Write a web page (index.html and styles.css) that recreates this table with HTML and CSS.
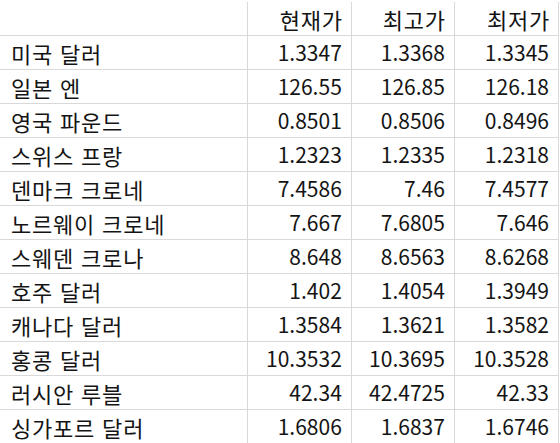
FILE: index.html
```html
<!DOCTYPE html>
<html lang="ko">
<head>
<meta charset="utf-8">
<link rel="stylesheet" href="styles.css">
</head>
<body>
<table class="rates">
  <colgroup>
    <col class="c-name"><col class="c-num"><col class="c-num2"><col class="c-num">
  </colgroup>
  <thead>
    <tr><th class="name"></th><th>현재가</th><th>최고가</th><th>최저가</th></tr>
  </thead>
  <tbody>
    <tr><td class="name">미국 달러</td><td>1.3347</td><td>1.3368</td><td>1.3345</td></tr>
    <tr><td class="name">일본 엔</td><td>126.55</td><td>126.85</td><td>126.18</td></tr>
    <tr><td class="name">영국 파운드</td><td>0.8501</td><td>0.8506</td><td>0.8496</td></tr>
    <tr><td class="name">스위스 프랑</td><td>1.2323</td><td>1.2335</td><td>1.2318</td></tr>
    <tr><td class="name">덴마크 크로네</td><td>7.4586</td><td>7.46</td><td>7.4577</td></tr>
    <tr><td class="name">노르웨이 크로네</td><td>7.667</td><td>7.6805</td><td>7.646</td></tr>
    <tr><td class="name">스웨덴 크로나</td><td>8.648</td><td>8.6563</td><td>8.6268</td></tr>
    <tr><td class="name">호주 달러</td><td>1.402</td><td>1.4054</td><td>1.3949</td></tr>
    <tr><td class="name">캐나다 달러</td><td>1.3584</td><td>1.3621</td><td>1.3582</td></tr>
    <tr><td class="name">홍콩 달러</td><td>10.3532</td><td>10.3695</td><td>10.3528</td></tr>
    <tr><td class="name">러시안 루블</td><td>42.34</td><td>42.4725</td><td>42.33</td></tr>
    <tr><td class="name">싱가포르 달러</td><td>1.6806</td><td>1.6837</td><td>1.6746</td></tr>
  </tbody>
</table>
</body>
</html>
```
FILE: styles.css
```css
html, body {
  margin: 0;
  padding: 0;
  background: #ffffff;
}
body {
  font-family: "Noto Sans CJK KR", "Noto Sans", sans-serif;
  color: #141414;
  overflow: hidden;
}
.rates {
  border-collapse: collapse;
  table-layout: fixed;
  width: 559px;
  margin-top: 2px;
}
.c-name { width: 247px; }
.c-num { width: 104px; }
.c-num2 { width: 103px; }
.rates th,
.rates td {
  height: 33px;
  padding: 0 9px 0 10px;
  font-size: 21px;
  font-weight: normal;
  line-height: 1;
  text-align: right;
  vertical-align: middle;
  border-right: 1px solid #d9d9d9;
  border-bottom: 1px solid #d9d9d9;
  white-space: nowrap;
  overflow: hidden;
}
.rates th {
  font-size: 22px;
  letter-spacing: 0.8px;
  padding-right: 8px;
}
.rates .name {
  text-align: left;
  font-size: 22px;
  letter-spacing: 0.8px;
  padding-left: 11px;
}
```
